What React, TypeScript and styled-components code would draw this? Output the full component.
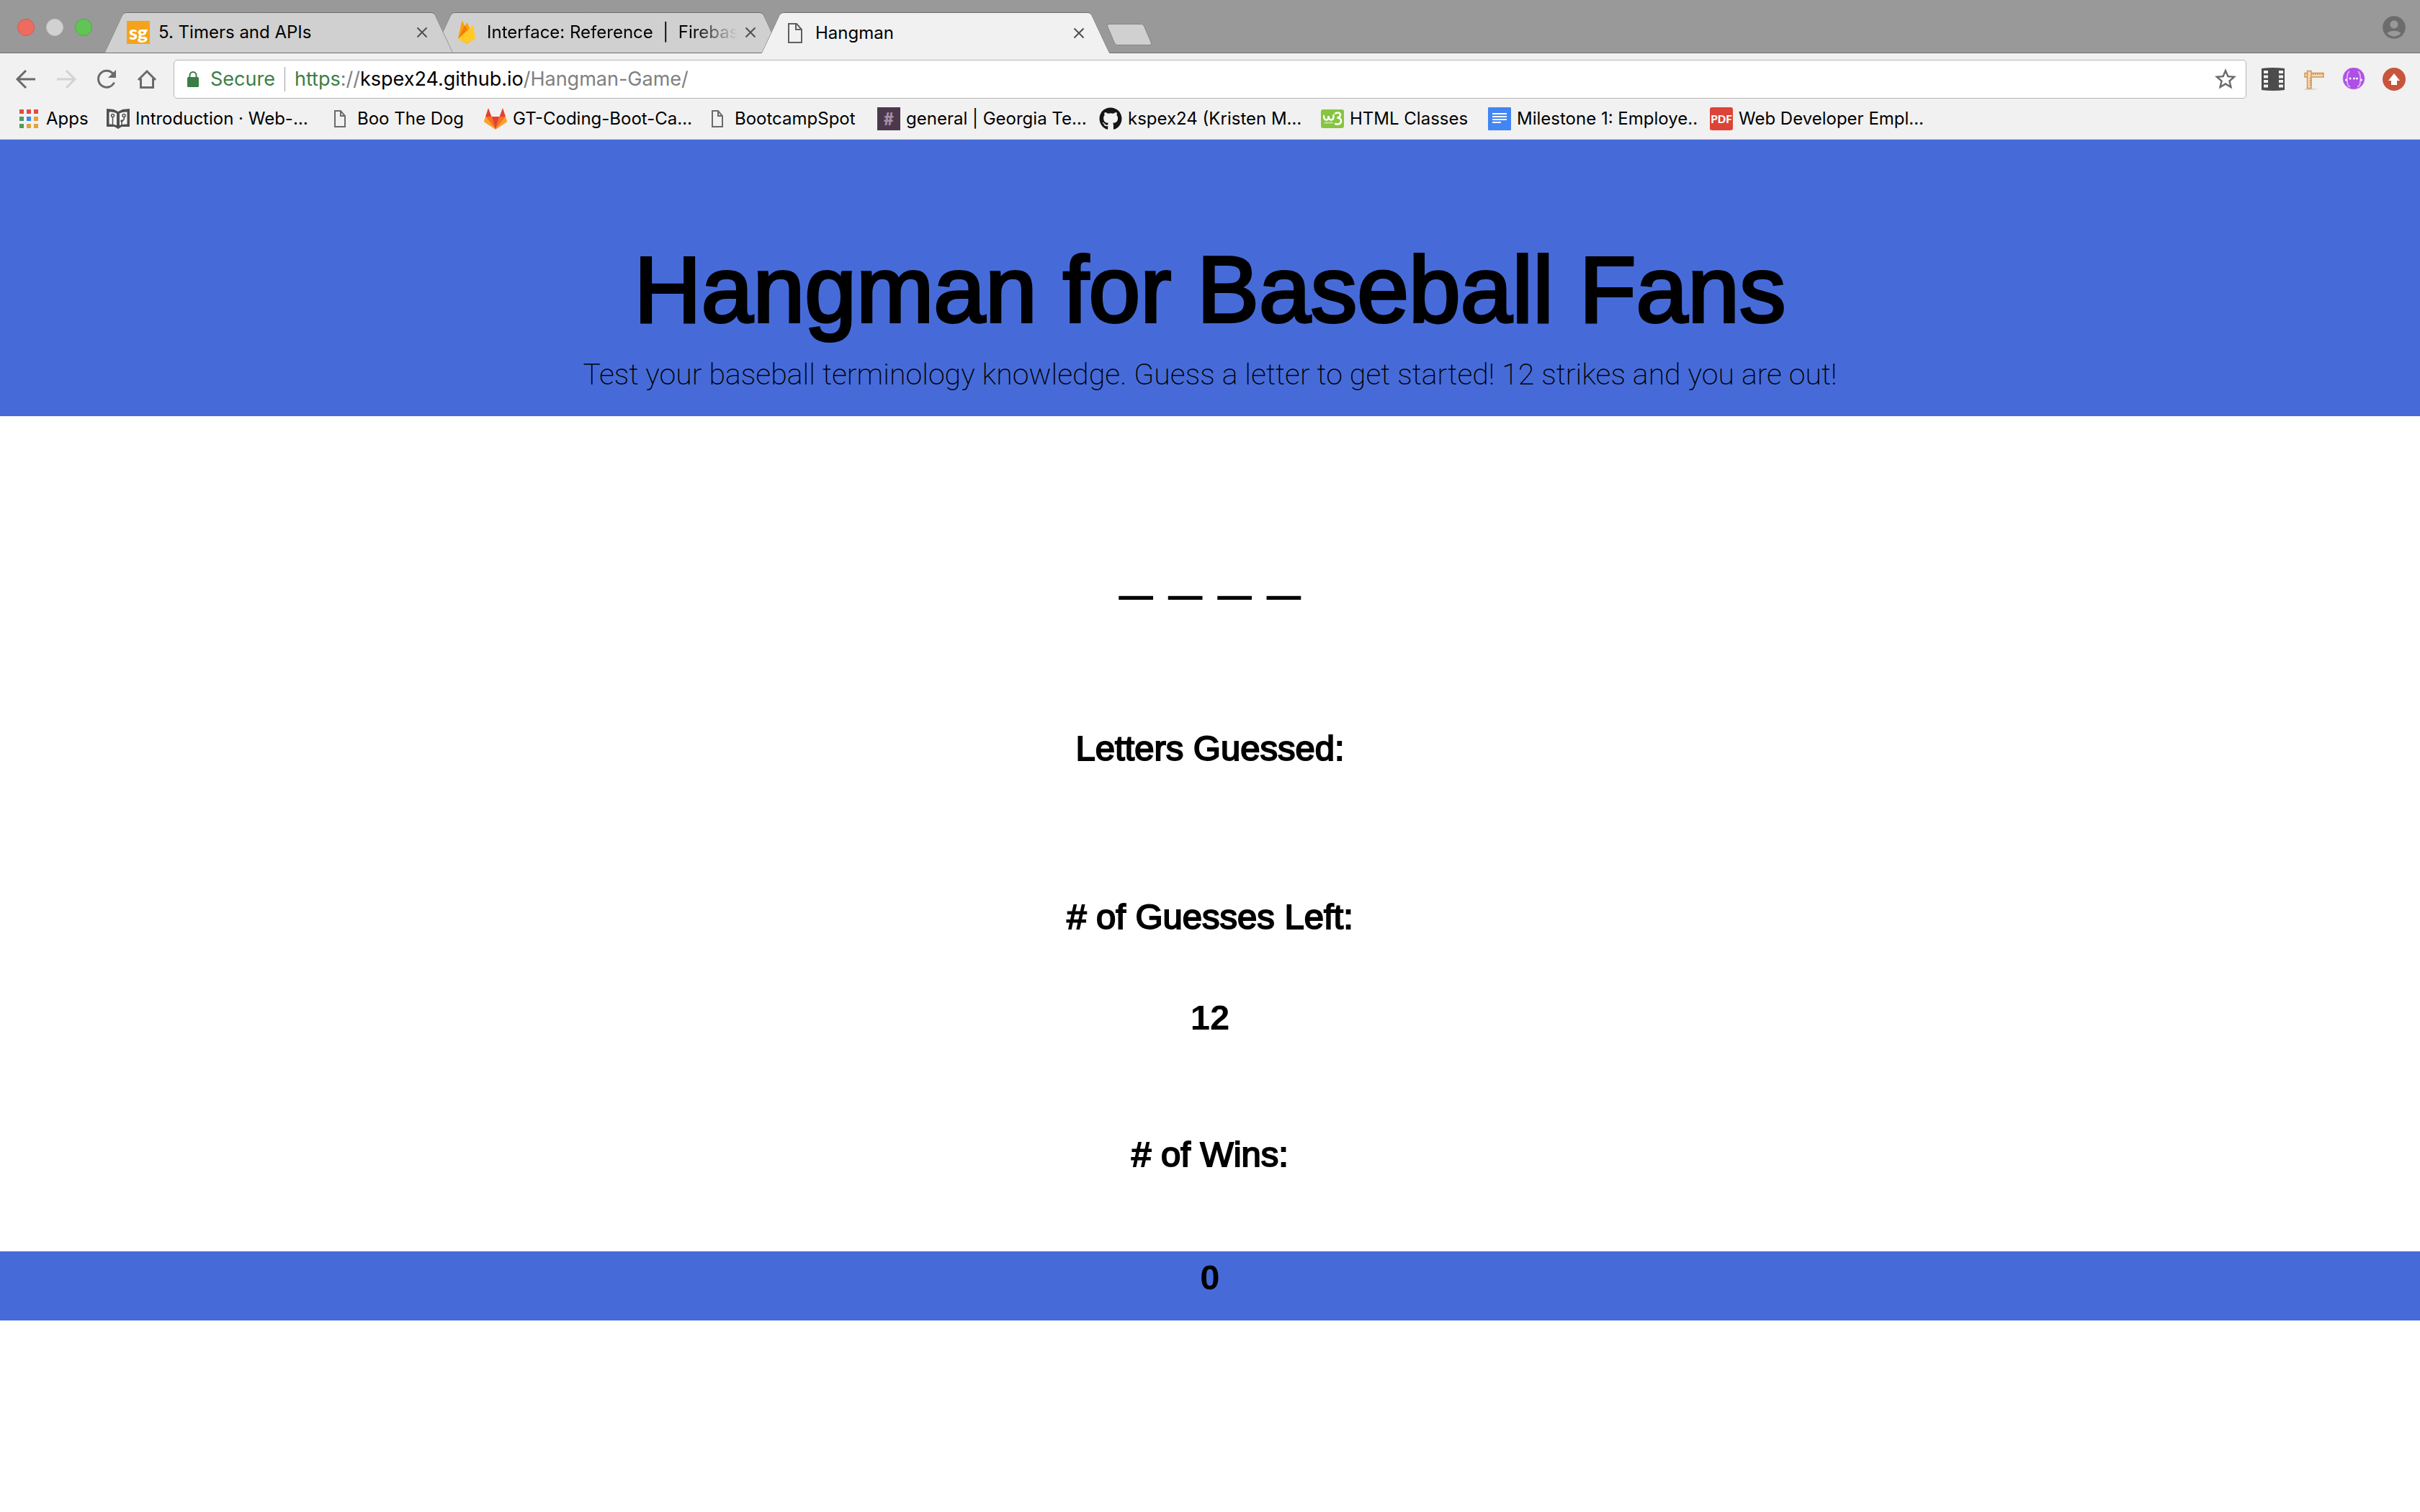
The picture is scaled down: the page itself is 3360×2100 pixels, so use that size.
import React from "react";
import styled, { createGlobalStyle } from "styled-components";
import { FaGithub } from "react-icons/fa";
import { MdAccountCircle, MdStarBorder } from "react-icons/md";

const GlobalStyle = createGlobalStyle`
  * { box-sizing: border-box; }
  body {
    margin: 0;
    background: #fff;
    color: #000;
    font-family: "Liberation Sans", Arial, sans-serif;
  }
  button { border: 0; padding: 0; background: none; font: inherit; color: inherit; }
  h1, h2, h3, p { margin: 0; }
`;

const BLUE = "#466bd9";

/* ---------- Browser window ---------- */

const Browser = styled.div`
  font-family: Inter, "Open Sans", sans-serif;
  font-size: 24px;
  line-height: 32px;
`;

const TabStrip = styled.div`
  display: flex;
  align-items: flex-end;
  height: 74px;
  padding-left: 24px;
  padding-right: 20px;
  background: #999;
  border-bottom: 1px solid #6f6f6f;
`;

const WindowButtons = styled.div`
  display: flex;
  gap: 16px;
  margin-right: 17px;
  margin-bottom: 23px;
`;

const WindowButton = styled.button<{ $fill: string; $edge: string }>`
  width: 24px;
  height: 24px;
  border-radius: 50%;
  border: 1px solid ${(p) => p.$edge};
  background: ${(p) => p.$fill};
`;

const Tab = styled.div<{ $active?: boolean; $level: number }>`
  position: relative;
  isolation: isolate;
  z-index: ${(p) => p.$level};
  display: flex;
  align-items: center;
  width: 484px;
  height: ${(p) => (p.$active ? 57 : 56)}px;
  margin-bottom: ${(p) => (p.$active ? -1 : 0)}px;
  padding: 0 35px 0 31px;

  & + & {
    margin-left: -28px;
  }

  &::before,
  &::after {
    content: "";
    position: absolute;
    z-index: -1;
    top: 0;
    bottom: 0;
    width: 50%;
    background: ${(p) => (p.$active ? "#f1f1f1" : "#d0d0d0")};
    border-top: 1px solid #6f6f6f;
  }
  &::before {
    left: 0;
    border-left: 1px solid #808080;
    border-top-left-radius: 5px;
    transform: skewX(-25deg);
    transform-origin: bottom left;
  }
  &::after {
    right: 0;
    border-right: 1px solid #808080;
    border-top-right-radius: 5px;
    transform: skewX(25deg);
    transform-origin: bottom right;
  }
`;

const TabIcon = styled.span`
  display: flex;
  justify-content: center;
  width: 32px;
  margin-right: 12px;
`;

const TabTitle = styled.button<{ $faded?: boolean }>`
  flex: 1;
  min-width: 0;
  text-align: left;
  white-space: pre;
  mask-image: ${(p) => (p.$faded ? "linear-gradient(to right, #000 82%, transparent 100%)" : "none")};
`;

const CloseButton = styled.button`
  display: flex;
  margin-left: 10px;
`;

const NewTab = styled.button`
  width: 52px;
  height: 30px;
  margin: 0 0 10px 1px;
  border: 1px solid #858585;
  border-radius: 4px;
  background: #d0d0d0;
  transform: skewX(23deg);
`;

const Account = styled.button`
  display: flex;
  margin-left: auto;
  margin-bottom: 16px;
  margin-right: -3px;
  color: #6c6c6c;
`;

const Toolbar = styled.div`
  display: flex;
  align-items: center;
  padding: 9px 20px 0 20px;
  background: #f1f1f1;
`;

const NavButtons = styled.div`
  display: flex;
  gap: 24px;
  margin-right: 21px;
`;

const IconButton = styled.button`
  display: flex;
`;

const Omnibox = styled.div`
  flex: 1;
  display: flex;
  align-items: center;
  height: 54px;
  padding: 0 10px 0 18px;
  border: 1px solid #b4b4b4;
  border-radius: 5px;
  background: #fff;
  font-size: 27px;
  line-height: 34px;
`;

const Secure = styled.span`
  display: flex;
  align-items: center;
  gap: 16px;
  padding-right: 13px;
  border-right: 1px solid #a0a0a0;
  color: #3a7e46;
`;

const Address = styled.div`
  flex: 1;
  margin-left: 13px;
  color: #808080;
  outline: none;
`;

const Scheme = styled.span`
  color: #3a7e46;
`;

const Host = styled.span`
  color: #000;
`;

const Extensions = styled.div`
  display: flex;
  gap: 24px;
  margin-left: 21px;
`;

const BookmarkBar = styled.nav`
  display: flex;
  align-items: center;
  height: 57px;
  padding-left: 24px;
  background: #f1f1f1;
  border-bottom: 1px solid #cfd0d6;
`;

const Bookmark = styled.a<{ $width: number }>`
  display: flex;
  align-items: center;
  flex: 0 0 ${(p) => p.$width}px;
  gap: 8px;
  color: inherit;
  text-decoration: none;
  white-space: nowrap;
`;

const Tile = styled.span<{ $bg: string; $color: string; $size: number; $radius?: number }>`
  display: flex;
  align-items: center;
  justify-content: center;
  flex: 0 0 32px;
  height: 32px;
  border-radius: ${(p) => p.$radius ?? 0}px;
  background: ${(p) => p.$bg};
  color: ${(p) => p.$color};
  font-family: Lato, sans-serif;
  font-size: ${(p) => p.$size}px;
  line-height: 28px;
  font-weight: 900;
`;

/* ---------- Game page ---------- */

const Header = styled.header`
  padding: 136px 0 32px;
  background: ${BLUE};
  text-align: center;
`;

const Title = styled.h1`
  font-size: 129px;
  line-height: 144px;
  font-weight: 400;
  -webkit-text-stroke: 4px #000;
`;

const Lead = styled.p`
  margin-top: 20px;
  font-family: Roboto, sans-serif;
  font-size: 41px;
  line-height: 52px;
  font-weight: 200;
`;

const Game = styled.main`
  display: flex;
  flex-direction: column;
  align-items: center;
  padding-top: 163px;
  padding-bottom: 107px;
`;

const Word = styled.p`
  margin-bottom: 174px;
  font-size: 82px;
  line-height: 96px;
`;

const Label = styled.h2<{ $after?: number }>`
  margin-bottom: ${(p) => p.$after ?? 0}px;
  font-size: 49px;
  line-height: 56px;
  font-weight: 400;
  -webkit-text-stroke: 2px #000;
`;

const Count = styled.h3<{ $after?: number }>`
  margin-bottom: ${(p) => p.$after ?? 0}px;
  font-size: 49px;
  line-height: 56px;
  font-weight: 700;
`;

const Footer = styled.footer`
  padding: 8px 0 32px;
  background: ${BLUE};
  text-align: center;
`;

/* ---------- Icons ---------- */

const CloseIcon = () => (
  <svg width="16" height="16" viewBox="0 0 16 16" stroke="#505050" strokeWidth="2">
    <path d="M1.500 1.500L14.500 14.500M14.500 1.500L1.500 14.500" />
  </svg>
);

const FileIcon = () => (
  <svg width="20" height="28" viewBox="0 0 20 28" fill="none" stroke="#606060" strokeWidth="2">
    <path d="M1 1H12L19 9V27H1Z" />
    <path d="M11 1V9H19" />
  </svg>
);

const LockIcon = () => (
  <svg width="16" height="22" viewBox="0 0 16 22">
    <rect y="8" width="16" height="14" rx="1.500" fill="#3a7e46" />
    <path d="M3.500 9V5.500A4.500 4.500 0 0 1 12.500 5.500V9" fill="none" stroke="#3a7e46" strokeWidth="2" />
  </svg>
);

const FirebaseIcon = () => (
  <svg width="24" height="32" viewBox="0 0 24 32">
    <path d="M0 25L5 1Q5.500 0 6.200 1L9 6Z" fill="#ffa000" />
    <path d="M0 25L12 3Q12.500 2 13 3L17 12Z" fill="#ffa000" />
    <path d="M0 25L9 6L14.500 14Z" fill="#f57c00" />
    <path d="M0 25L20 6.500Q21 6 21.300 7L24 25L13.500 31Q12 31.800 10.500 31Z" fill="#ffca28" />
    <path d="M0 25L10.500 30.500Q12 31.200 13.500 30.500L24 25L13.500 31Q12 32.500 10.500 31Z" fill="#f5a623" />
  </svg>
);

const ArrowIcon = ({ forward }: { forward?: boolean }) => (
  <svg width="32" height="32" viewBox="0 0 32 32" fill="none" stroke={forward ? "#d3d3d3" : "#6a6a6a"} strokeWidth="3">
    <path d={forward ? "M3 16H27M16 4L28 16L16 28" : "M29 16H5M16 4L4 16L16 28"} />
  </svg>
);

const ReloadIcon = () => (
  <svg width="32" height="32" viewBox="0 0 32 32">
    <path d="M25 8.500A11.500 11.500 0 1 0 26.500 20.500" fill="none" stroke="#6a6a6a" strokeWidth="3" />
    <path d="M29 3V14H18Z" fill="#6a6a6a" />
  </svg>
);

const HomeIcon = () => (
  <svg width="32" height="32" viewBox="0 0 32 32" fill="none" stroke="#6a6a6a" strokeWidth="3">
    <path d="M4 17L16 5L28 17M7.500 15V27.500H24.500V15" />
  </svg>
);

const FilmIcon = () => (
  <svg width="32" height="32" viewBox="0 0 32 32">
    <path d="M0 1Q16 -1 32 1V31Q16 33 0 31Z" fill="#4c4c4c" />
    {[4, 10.500, 17, 23.500].map((y) => (
      <g key={y} fill="#f1f1f1">
        <rect x="3" y={y} width="6" height="4" />
        <rect x="24" y={y} width="6" height="4" />
      </g>
    ))}
  </svg>
);

const RulerIcon = () => (
  <svg width="32" height="32" viewBox="0 0 32 32">
    <path d="M4 29H24L14 31H4Z" fill="#d2d2d2" />
    <g fill="#f7d9ac" stroke="#cf965a" strokeWidth="1.500">
      <rect x="4" y="7.500" width="26" height="5.500" />
      <rect x="7.500" y="4.500" width="5.500" height="24" />
    </g>
    <path d="M16 8V10M19 8V10M22 8V10M25 8V10M28 8V10M10.500 15H13M10.500 18H13M10.500 21H13M10.500 24H13" stroke="#b87c3e" />
  </svg>
);

const PurpleIcon = () => (
  <svg width="32" height="32" viewBox="0 0 32 32">
    <circle cx="16" cy="15" r="15" fill="#ae4fe6" />
    <circle cx="16" cy="15" r="15" fill="none" stroke="#c98af0" strokeDasharray="3 2" />
    <path d="M10 5C6 8 7.500 12 6.500 16C7.500 21 6 24 11 27M22 5C26 8 24.500 12 25.500 16C24.500 21 26 24 21 27" fill="none" stroke="#ddb0f5" strokeWidth="2" />
    <g fill="#fff">
      <circle cx="11" cy="15" r="1.500" />
      <circle cx="16.500" cy="15" r="1.500" />
      <circle cx="20.500" cy="15" r="1.500" />
      <circle cx="5.500" cy="17" r="1.500" />
      <circle cx="26.500" cy="17" r="1.500" />
    </g>
  </svg>
);

const UpIcon = () => (
  <svg width="32" height="32" viewBox="0 0 32 32">
    <circle cx="16" cy="16" r="16" fill="#c7553c" />
    <path d="M16 8L24 18H20V24H12V18H8Z" fill="#fff" />
  </svg>
);

const AppsIcon = () => {
  const colors = ["#e34b3d", "#e34b3d", "#e34b3d", "#539a5e", "#3d84f0", "#e3a23b", "#539a5e", "#e3a23b", "#e3a23b"];
  return (
    <svg width="32" height="26" viewBox="0 0 32 26">
      {colors.map((c, i) => (
        <rect key={i} x={3 + (i % 3) * 10} y={Math.floor(i / 3) * 10} width="6" height="6" fill={c} />
      ))}
    </svg>
  );
};

const BookIcon = () => (
  <svg width="32" height="28" viewBox="0 0 32 28">
    <path d="M0 0L10 1L16 4L22 1L32 0V25L21 25L16 28L11 25L0 25Z" fill="#4f4f4f" />
    <path d="M3.500 4.500Q10 4 14 6.500V23Q10 21 3.500 21.500ZM28.500 4.500Q22 4 18 6.500V23Q22 21 28.500 21.500Z" fill="#f6f6f6" />
    <g fill="none" stroke="#4f4f4f" strokeWidth="1.500">
      <circle cx="8.500" cy="9.500" r="2" />
      <path d="M8.500 11V22M21 23V17Q25 16 24.500 11" />
      <circle cx="24" cy="9.500" r="2" />
      <circle cx="21" cy="17" r="1" />
    </g>
  </svg>
);

const PageIcon = () => (
  <svg width="32" height="24" viewBox="0 0 32 24" fill="none" stroke="#6a6a6a" strokeWidth="2">
    <path d="M9 1H17L23 8V23H9Z" />
    <path d="M17 1V8H23" />
  </svg>
);

const GitlabIcon = () => (
  <svg width="32" height="30" viewBox="0 0 32 30">
    <path d="M6 0L10.500 12H2ZM26 0L30 12H21.500Z" fill="#e24329" />
    <path d="M2 12H10.500L16 30ZM30 12H21.500L16 30Z" fill="#fc6d26" />
    <path d="M2 12L0 18Q0 19 1 20L16 30ZM30 12L32 18Q32 19 31 20L16 30Z" fill="#fca326" />
    <path d="M10.500 12H21.500L16 30Z" fill="#e24329" />
  </svg>
);

const W3Icon = () => (
  <svg width="32" height="32" viewBox="0 0 32 32">
    <rect y="3" width="32" height="26" rx="3" fill="#86c540" />
    <g fill="none" stroke="#fff" strokeWidth="2.500" strokeLinecap="round">
      <path d="M4 12Q4 18 8 17.500Q10.500 17 10.500 12Q11 18 14.500 17.500Q18 17 17.500 11" />
      <path d="M20 8.500Q26 6 27 10Q27 14 22.500 14.500Q29 15 28 20Q26 25 20 23" />
    </g>
    <path d="M5 21.500H17" stroke="#d8edc0" strokeWidth="2" strokeDasharray="1.500 .5" />
  </svg>
);

const DocsIcon = () => (
  <svg width="32" height="32" viewBox="0 0 32 32">
    <rect width="32" height="32" rx="1" fill="#4285f4" />
    <path d="M6 9H26M6 13H26M6 17H26M6 21H18" stroke="#fff" strokeWidth="2" />
  </svg>
);

const bookmarks = [
  { label: "Apps", width: 124, icon: <AppsIcon /> },
  { label: "Introduction · Web-…", width: 308, icon: <BookIcon /> },
  { label: "Boo The Dog", width: 216, icon: <PageIcon /> },
  { label: "GT-Coding-Boot-Ca…", width: 308, icon: <GitlabIcon /> },
  { label: "BootcampSpot", width: 238, icon: <PageIcon /> },
  { label: "general | Georgia Te…", width: 308, icon: <Tile $bg="#4c384c" $color="#a58fa6" $size={24}>#</Tile> },
  { label: "kspex24 (Kristen M…", width: 308, icon: <FaGithub size={32} color="#151515" /> },
  { label: "HTML Classes", width: 232, icon: <W3Icon /> },
  { label: "Milestone 1: Employe..", width: 308, icon: <DocsIcon /> },
  { label: "Web Developer Empl…", width: 308, icon: <Tile $bg="#dc4437" $color="#fff" $size={15} $radius={3}>PDF</Tile> },
];

export default function App() {
  return (
    <>
      <GlobalStyle />
      <Browser>
        <TabStrip>
          <WindowButtons>
            <WindowButton aria-label="Close window" $fill="#ee6b60" $edge="#d9594f" />
            <WindowButton aria-label="Minimize window" $fill="#d1d1d1" $edge="#c4c4c4" />
            <WindowButton aria-label="Zoom window" $fill="#60c554" $edge="#4dab42" />
          </WindowButtons>
          <Tab $level={3}>
            <TabIcon><Tile $bg="#f5a31a" $color="#fff" $size={27}>sg</Tile></TabIcon>
            <TabTitle>5. Timers and APIs</TabTitle>
            <CloseButton aria-label="Close tab"><CloseIcon /></CloseButton>
          </Tab>
          <Tab $level={2}>
            <TabIcon><FirebaseIcon /></TabIcon>
            <TabTitle $faded>{"Interface: Reference  |  Firebas"}</TabTitle>
            <CloseButton aria-label="Close tab"><CloseIcon /></CloseButton>
          </Tab>
          <Tab $active $level={4}>
            <TabIcon><FileIcon /></TabIcon>
            <TabTitle>Hangman</TabTitle>
            <CloseButton aria-label="Close tab"><CloseIcon /></CloseButton>
          </Tab>
          <NewTab aria-label="New tab" />
          <Account aria-label="Account"><MdAccountCircle size={38} /></Account>
        </TabStrip>
        <Toolbar>
          <NavButtons>
            <IconButton aria-label="Back"><ArrowIcon /></IconButton>
            <IconButton aria-label="Forward" disabled><ArrowIcon forward /></IconButton>
            <IconButton aria-label="Reload"><ReloadIcon /></IconButton>
            <IconButton aria-label="Home"><HomeIcon /></IconButton>
          </NavButtons>
          <Omnibox>
            <Secure><LockIcon />Secure</Secure>
            <Address role="textbox" aria-label="Address" contentEditable suppressContentEditableWarning spellCheck={false}>
              <Scheme>https</Scheme>://<Host>kspex24.github.io</Host>/Hangman-Game/
            </Address>
            <IconButton aria-label="Bookmark this page"><MdStarBorder size={36} color="#6a6a6a" /></IconButton>
          </Omnibox>
          <Extensions>
            <IconButton aria-label="Film strip"><FilmIcon /></IconButton>
            <IconButton aria-label="Ruler"><RulerIcon /></IconButton>
            <IconButton aria-label="Snippets"><PurpleIcon /></IconButton>
            <IconButton aria-label="Update"><UpIcon /></IconButton>
          </Extensions>
        </Toolbar>
        <BookmarkBar>
          {bookmarks.map((b) => (
            <Bookmark key={b.label} href="#" $width={b.width}>
              {b.icon}
              {b.label}
            </Bookmark>
          ))}
        </BookmarkBar>
      </Browser>
      <Header>
        <Title>Hangman for Baseball Fans</Title>
        <Lead>Test your baseball terminology knowledge. Guess a letter to get started! 12 strikes and you are out!</Lead>
      </Header>
      <Game>
        <Word>_ _ _ _</Word>
        <Label $after={178}>Letters Guessed:</Label>
        <Label $after={84}># of Guesses Left:</Label>
        <Count $after={134}>12</Count>
        <Label># of Wins:</Label>
      </Game>
      <Footer>
        <Count>0</Count>
      </Footer>
    </>
  );
}
